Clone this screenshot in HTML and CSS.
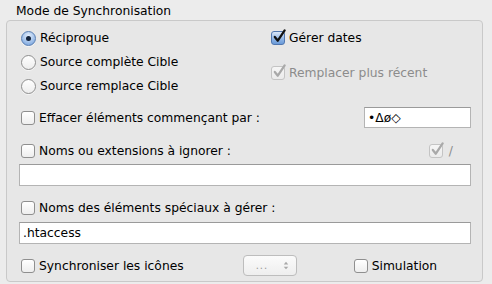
FILE: index.html
```html
<!DOCTYPE html>
<html>
<head>
<meta charset="utf-8">
<link rel="stylesheet" href="styles.css">
</head>
<body>
<div class="panel">
  <div class="title">Mode de Synchronisation</div>
  <div class="box">
    <div class="top">
      <div class="col-left">
        <div class="row r24"><span class="radio on"><span class="dot"></span></span><span class="lbl">Réciproque</span></div>
        <div class="row r24"><span class="radio"></span><span class="lbl">Source complète Cible</span></div>
        <div class="row r24"><span class="radio"></span><span class="lbl">Source remplace Cible</span></div>
      </div>
      <div class="col-right">
        <div class="row r24"><span class="cb checked"><svg viewBox="0 0 16 16" class="tick"><path d="M3 8.5 L6.2 12.5 L13.5 1.5" /></svg></span><span class="lbl">Gérer dates</span></div>
        <div class="row r24 mt11"><span class="cb disabled"><svg viewBox="0 0 16 16" class="tick"><path d="M3 8.5 L6.2 12.5 L13.5 1.5" /></svg></span><span class="lbl dim">Remplacer plus récent</span></div>
      </div>
    </div>
    <div class="row efface">
      <span class="cb"></span><span class="lbl">Effacer éléments commençant par :</span>
      <div class="field small">•Δø◇</div>
    </div>
    <div class="row r20 noms">
      <span class="cb"></span><span class="lbl">Noms ou extensions à ignorer :</span>
      <span class="slash"><span class="cb disabled"><svg viewBox="0 0 16 16" class="tick"><path d="M3 8.5 L6.2 12.5 L13.5 1.5" /></svg></span><span class="lbl dim">/</span></span>
    </div>
    <div class="field wide f1"></div>
    <div class="row r20 spec">
      <span class="cb"></span><span class="lbl">Noms des éléments spéciaux à gérer :</span>
    </div>
    <div class="field wide f2">.htaccess</div>
    <div class="row bottom">
      <span class="cb"></span><span class="lbl">Synchroniser les icônes</span>
      <div class="popup"><span class="dots">...</span><svg class="arrows" viewBox="0 0 8 12"><path d="M4 1 L7 4.5 L1 4.5 Z M4 11 L7 7.5 L1 7.5 Z"/></svg></div>
      <span class="cb sim"></span><span class="lbl">Simulation</span>
    </div>
  </div>
</div>
</body>
</html>
```

FILE: styles.css
```css
html, body {
  margin: 0;
  padding: 0;
  background: #ececec;
}
body {
  width: 492px;
  height: 284px;
  overflow: hidden;
  font-family: "DejaVu Sans", "Lucida Grande", sans-serif;
  font-size: 12.3px;
  color: #000;
}
.panel {
  padding-left: 6px;
}
.title {
  height: 20px;
  line-height: 22px;
  padding-left: 10px;
  box-sizing: border-box;
  padding-top: 0;
}
.box {
  width: 477px;
  height: 262px;
  box-sizing: border-box;
  border: 1px solid #c9c9c9;
  border-radius: 4px;
  background: #e7e7e7;
  padding: 5px 0 0 13px;
}
.top {
  display: flex;
  height: 72px;
}
.col-left {
  width: 250px;
}
.row {
  display: flex;
  align-items: center;
}
.r24 { height: 24px; }
.r20 { height: 20px; }
.mt11 { margin-top: 11px; }
.lbl {
  white-space: nowrap;
}
.dim { color: #8c8c8c; }

.radio {
  width: 15px;
  height: 15px;
  box-sizing: border-box;
  border-radius: 50%;
  border: 1px solid #8f8f8f;
  background: linear-gradient(#ffffff, #ededed);
  margin-left: 1px;
  margin-right: 4px;
  display: flex;
  align-items: center;
  justify-content: center;
  box-shadow: 0 1px 0 rgba(255,255,255,0.6);
}
.radio.on {
  border-color: #5a7fb3;
  background: radial-gradient(circle at 50% 30%, #e4eefb 0%, #a9c6ec 50%, #6c9bd9 100%);
}
.radio .dot {
  width: 5px;
  height: 5px;
  border-radius: 50%;
  background: #14233b;
}

.cb {
  position: relative;
  width: 14px;
  height: 14px;
  box-sizing: border-box;
  border: 1px solid #8f8f8f;
  border-radius: 3px;
  background: linear-gradient(#ffffff, #eeeeee);
  margin-left: 1px;
  margin-right: 4px;
  flex: none;
}
.cb.checked {
  border-color: #5077b0;
  background: linear-gradient(#dbe7f8, #8db4e6 60%, #6a9ad8);
}
.cb.disabled {
  border-color: #c4c4c4;
  background: linear-gradient(#f6f6f6, #ebebeb);
}
.tick {
  position: absolute;
  left: 0px;
  top: -3px;
  width: 15px;
  height: 15px;
  overflow: visible;
}
.tick path {
  fill: none;
  stroke: #111;
  stroke-width: 2.4;
  stroke-linecap: round;
  stroke-linejoin: round;
}
.cb.disabled .tick path {
  stroke: #a9a9a9;
}

.efface {
  margin-top: 9px;
  height: 21px;
}
.field {
  box-sizing: border-box;
  background: #fff;
  border: 1px solid #b4b4b4;
  border-top-color: #9a9a9a;
  padding-left: 3px;
  display: flex;
  align-items: center;
  white-space: nowrap;
}
.field.small {
  margin-left: auto;
  margin-right: 11px;
  width: 107px;
  height: 21px;
}
.noms {
  margin-top: 13px;
}
.slash {
  margin-left: auto;
  margin-right: 29px;
  display: flex;
  align-items: center;
}
.slash .cb { margin-right: 6px; }
.field.wide {
  margin-left: -1px;
  width: 452px;
  height: 22px;
}
.f1 { margin-top: 3px; }
.spec { margin-top: 12px; }
.f2 { margin-top: 4px; }
.bottom {
  margin-top: 11px;
  height: 21px;
}
.popup {
  margin-left: 59px;
  width: 54px;
  height: 21px;
  box-sizing: border-box;
  border: 1px solid #bdbdbd;
  border-radius: 4px;
  background: linear-gradient(#fbfbfb, #eeeeee);
  display: flex;
  align-items: center;
  padding-left: 12px;
  color: #9a9a9a;
  font-size: 10px;
  position: relative;
}
.popup .dots {
  letter-spacing: 1px;
}
.arrows {
  position: absolute;
  right: 7px;
  top: 4px;
  width: 6px;
  height: 11px;
  fill: #a8a8a8;
}
.cb.sim {
  margin-left: 57px;
}
```
